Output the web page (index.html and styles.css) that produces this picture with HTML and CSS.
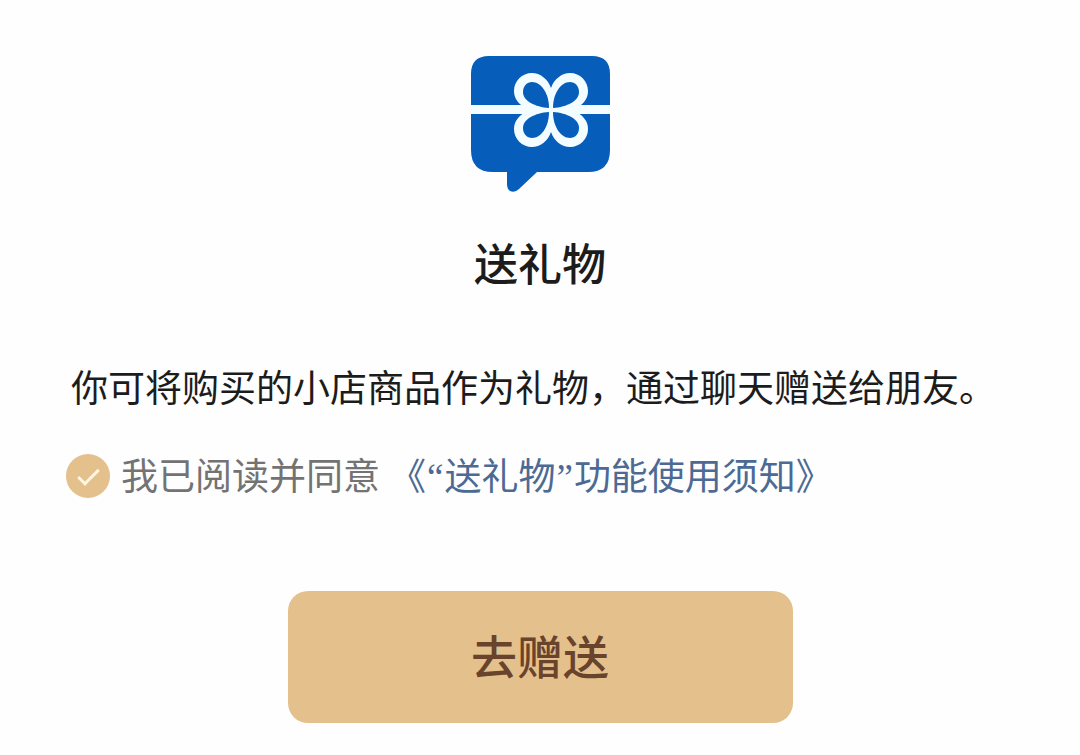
FILE: index.html
```html
<!DOCTYPE html>
<html lang="zh-CN">
  <head>
    <meta charset="UTF-8" />
    <meta name="viewport" content="width=device-width, initial-scale=1.0" />
    <title>送礼物</title>
    <link rel="stylesheet" href="styles.css">
  </head>

  <body>
    <main class="gift">
      <svg class="gift_icon" viewBox="0 0 139 137" aria-hidden="true">
        <path
          fill="#065eba"
          d="M18 1H121Q139 1 139 19V95Q139 117 117 117H66L48 134Q44 138 39 136Q36 134 36 129V117H22Q0 117 0 95V19Q0 1 18 1Z"
        />
        <!-- 丝带 -->
        <path fill="#f3fcff" d="M0 50H139V59H0Z" />
        <!-- 蝴蝶结 -->
        <path
          fill="#f3fcff"
          d="M80 33C83 24 91 18 99 18C109 18 117 26 117 36C117 44 112 50 102 55C112 60 117 66 117 74C117 84 109 92 99 92C91 92 83 86 80 77C77 86 69 92 61 92C51 92 43 84 43 74C43 66 48 60 58 55C48 50 43 44 43 36C43 26 51 18 61 18C69 18 77 24 80 33Z"
        />
        <g fill="#065eba">
          <path d="M78 53C78 38 70 27 61 27C56 27 52 31 52 37C52 46 64 52 78 53Z" />
          <path d="M82 53C82 38 90 27 99 27C104 27 108 31 108 37C108 46 96 52 82 53Z" />
          <path d="M78 57C78 72 70 83 61 83C56 83 52 79 52 73C52 64 64 58 78 57Z" />
          <path d="M82 57C82 72 90 83 99 83C104 83 108 79 108 73C108 64 96 58 82 57Z" />
        </g>
      </svg>

      <h1>送礼物</h1>

      <form class="gift_form">
        <p>你可将购买的小店商品作为礼物，通过聊天赠送给朋友。</p>
        <div class="agree">
          <input type="checkbox" id="agree" checked />
          <label for="agree">我已阅读并同意</label>
          <a href="#">《<span class="quote">“</span>送礼物<span class="quote">”</span>功能使用须知》</a>
        </div>
        <button type="button">去赠送</button>
      </form>
    </main>
  </body>
</html>
```

FILE: styles.css
```css
* {
  box-sizing: border-box;
}

body {
  margin: 0;
  background-color: #fefefe;
  color: #1c1c1c;
  font-family: "Noto Sans CJK SC", sans-serif;
  font-size: 37px;
}

.gift {
  display: flex;
  flex-direction: column;
  align-items: center;
  padding: 55px 66px 32px;
}

.gift_icon {
  width: 139px;
  height: 137px;
}

h1 {
  margin: 40px 0 66px;
  font-size: 44px;
  font-weight: 500;
  line-height: 60px;
}

.gift_form {
  width: 100%;
}

p {
  margin: 0 0 40px;
  padding-left: 5px;
  line-height: 56px;
}

.agree {
  display: flex;
  align-items: center;
  height: 44px;
  line-height: 44px;
}

.agree input {
  appearance: none;
  flex: none;
  display: grid;
  place-items: center;
  width: 44px;
  height: 44px;
  margin: 0 11px 0 0;
  border-radius: 50%;
  background-color: #e4c08c;
}

.agree input:checked::before {
  content: "";
  width: 8px;
  height: 18px;
  margin-bottom: 4px;
  border: solid #fff6e2;
  border-width: 0 3px 3px 0;
  transform: rotate(45deg);
}

.agree label,
.agree a {
  padding-bottom: 4px;
}

.agree label {
  color: #737373;
}

.agree a {
  margin-left: 9px;
  color: #4c6a94;
  text-decoration: none;
}

.quote {
  padding: 0 1px;
  font-family: "Liberation Serif", serif;
  line-height: 1;
}

button {
  display: block;
  width: 60%;
  max-width: 505px;
  margin: 93px auto 0;
  padding: 33px 0 39px;
  border: none;
  border-radius: 20px;
  background-color: #e4c08c;
  color: #69432c;
  font-family: inherit;
  font-size: 46px;
  font-weight: 500;
  line-height: 60px;
}
```
